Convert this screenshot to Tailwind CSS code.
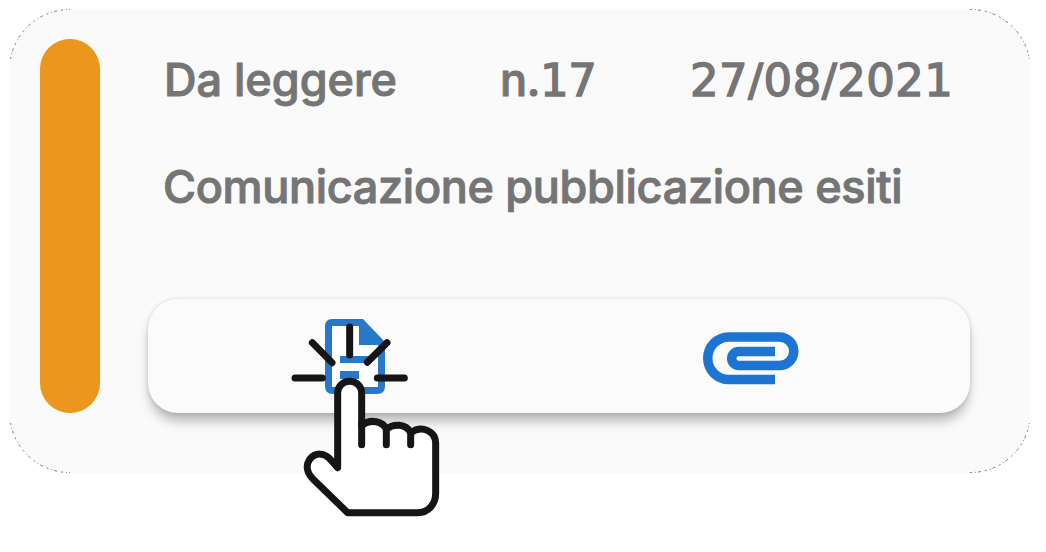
<!DOCTYPE html>
<html lang="it">
<head>
<meta charset="utf-8">
<title>Comunicazione</title>
<script src="https://cdn.jsdelivr.net/npm/@tailwindcss/browser@4"></script>
</head>
<body class="bg-white w-[1046px] h-[552px] overflow-hidden pl-[10px] pt-[9px]">
<main class="relative flex w-[1020px] h-[464px] rounded-[60px] bg-[#fafafa] pl-[30px] pt-[30px] text-[#757575] font-['Inter',sans-serif] font-medium text-[45px] leading-[56px]">
  <svg class="absolute inset-0" width="1020" height="464" fill="none" stroke="#444" stroke-width=".7" stroke-dasharray="2 3 1 2 3 4" aria-hidden="true">
    <path d="M.5 50A60 60 0 0 1 60 .5M960 .5A60 60 0 0 1 1019.500 50M.5 414A60 60 0 0 0 60 463.500M960 463.500A60 60 0 0 0 1019.500 414"/>
  </svg>
  <div class="w-[60px] h-[374px] rounded-full bg-[#eb961c] shrink-0"></div>
  <div class="ml-[48px] w-[822px]">
    <div class="flex h-[69px] pt-[13px] pl-[16px] whitespace-nowrap [-webkit-text-stroke:1px_#757575] [stroke-linejoin:round]">
      <span class="w-[336px]">Da leggere</span>
      <span class="w-[190px] tracking-[-0.4px]">n.<span class="font-['DejaVu_Sans',sans-serif] font-normal [-webkit-text-stroke:1.4px_#757575]">17</span></span>
      <span class="font-['DejaVu_Sans',sans-serif] font-normal tracking-[0.4px] pt-px [-webkit-text-stroke:1.4px_#757575]">27/08/2021</span>
    </div>
    <p class="mt-[51px] pl-[15px] whitespace-nowrap tracking-[-0.32px] [-webkit-text-stroke:1px_#757575]">Comunicazione pubblicazione esiti</p>
    <div class="mt-[84px] w-[822px] h-[114px] rounded-[30px] bg-[#fbfbfb] shadow-[0_10px_12px_-2px_rgba(0,0,0,.27),0_0_4px_rgba(0,0,0,.14)] grid grid-cols-2">
      <svg class="ml-[177px] mt-[20px]" width="60" height="75" viewBox="0 0 60 75" aria-label="Documento">
        <path fill="#fff" d="M4 4H36L56 25V71H4Z"/>
        <path fill="#2878ca" fill-rule="evenodd" d="M7 0H38L60 23V67Q60 75 52 75H8Q0 75 0 67V8Q0 0 7 0ZM7 7V68H53V26H34V7Z"/>
        <path fill="#2878ca" d="M15 37H45V44H15ZM15 52H34V60H15Z"/>
      </svg>
      <svg class="ml-[144px] mt-[33px]" width="96" height="53" viewBox="0 0 96 53" fill="none" stroke="#1c75d3" stroke-width="9.500" aria-label="Allegato">
        <path d="M72 47.500H26A21.250 21.250 0 0 1 26 5H76.500A14.250 14.250 0 0 1 76.500 33.500H35.700A7 7 0 0 1 35.700 19.500H72"/>
      </svg>
    </div>
  </div>
  <svg class="absolute left-[270px] top-[291px] blur-[0.5px]" width="180" height="230" viewBox="0 0 540 690" fill="none" stroke="#151515" stroke-width="21" stroke-linecap="round" stroke-linejoin="round" aria-hidden="true">
    <path d="M209 81V165M97 128L156 188M321 128L262 187M45 234H127M292 234H373"/>
    <path fill="#fff" d="M173 503V280C173 232 245 232 245 280V376C272 355 309 364 319 388C339 370 378 370 392 398C425 374 467 393 467 430V580C467 613 445 638 413 638H203L98 536C82 519 75 497 90 477C107 456 132 460 147 474Z"/>
    <path d="M245 370V434M319 388V434M392 398V434"/>
  </svg>
</main>
</body>
</html>
